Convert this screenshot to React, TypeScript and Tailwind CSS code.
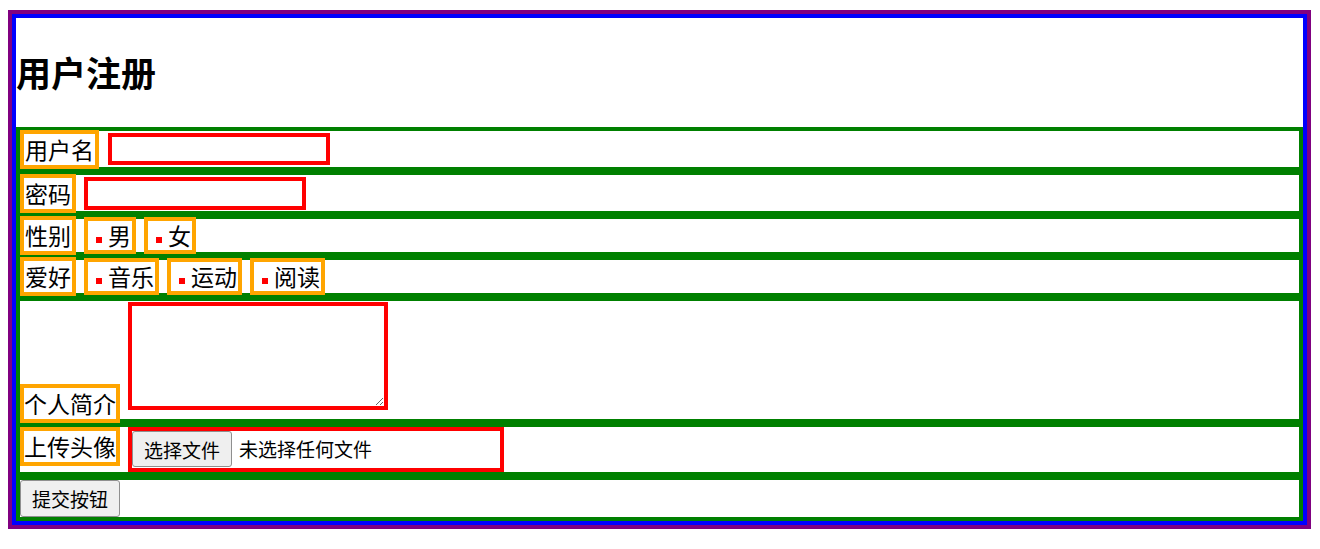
const font = { fontFamily: '"Noto Sans CJK SC", "Noto Sans", sans-serif' };

const Label = ({ children, className = "px-[1px]" }: { children: React.ReactNode; className?: string }) => (
  <span
    className={`shrink-0 border-4 border-[#ffa500] bg-white text-[23px] leading-[31px] text-black ${className}`}
  >
    {children}
  </span>
);

const Choice = ({ text }: { text: string }) => (
  <span className="flex shrink-0 items-center border-4 border-[#ffa500] bg-white pl-[8px] pr-[1px] text-[23px] leading-[29px] text-black">
    <span className="mr-[6px] mt-[8px] h-[6px] w-[6px] bg-[#ff0000]" />
    {text}
  </span>
);

const Row = ({ children, className = "" }: { children: React.ReactNode; className?: string }) => (
  <div className={`flex border-4 border-[#008000] ${className}`}>{children}</div>
);

const NativeButton = ({ children, className = "" }: { children: React.ReactNode; className?: string }) => (
  <button
    type="button"
    className={`shrink-0 rounded-[3px] border border-[#8f8f8f] bg-[#efefef] text-[19px] leading-none text-black ${className}`}
  >
    {children}
  </button>
);

export default function App() {
  return (
    <div className="min-h-[549px] bg-white pt-[10px]" style={font}>
      <div className="ml-[8px] w-[1303px] border-4 border-[#800080]">
        <div className="border-4 border-[#0000ff]">
          <h1 className="flex h-[109px] items-center pb-[1px] text-[35px] font-bold leading-[40px] text-black">
            用户注册
          </h1>
          <form onSubmit={(e) => e.preventDefault()}>
            <Row className="h-[44px] items-center gap-[9px]">
              <Label>用户名</Label>
              <input type="text" className="h-[32px] w-[222px] border-4 border-[#ff0000] bg-white outline-none" />
            </Row>
            <Row className="h-[44px] items-center gap-[8px]">
              <Label>密码</Label>
              <input type="password" className="h-[33px] w-[222px] border-4 border-[#ff0000] bg-white outline-none" />
            </Row>
            <Row className="h-[41px] items-center gap-[8px]">
              <Label>性别</Label>
              <Choice text="男" />
              <Choice text="女" />
            </Row>
            <Row className="h-[41px] items-center gap-[8px]">
              <Label>爱好</Label>
              <Choice text="音乐" />
              <Choice text="运动" />
              <Choice text="阅读" />
            </Row>
            <Row className="h-[126px] items-end gap-[8px]">
              <Label className="-mb-[4px] px-0">个人简介</Label>
              <textarea className="mb-[9px] h-[108px] w-[260px] border-4 border-[#ff0000] bg-white outline-none" />
            </Row>
            <Row className="h-[53px] items-start gap-[8px]">
              <Label className="px-0">上传头像</Label>
              <div className="flex h-[45px] w-[376px] items-start border-4 border-[#ff0000] bg-white">
                <NativeButton className="h-[36px] w-[100px]">选择文件</NativeButton>
                <span className="ml-[7px] text-[19px] leading-[36px] text-black">未选择任何文件</span>
              </div>
            </Row>
            <Row className="h-[45px] items-start">
              <NativeButton className="h-[37px] w-[100px]">提交按钮</NativeButton>
            </Row>
          </form>
        </div>
      </div>
    </div>
  );
}
